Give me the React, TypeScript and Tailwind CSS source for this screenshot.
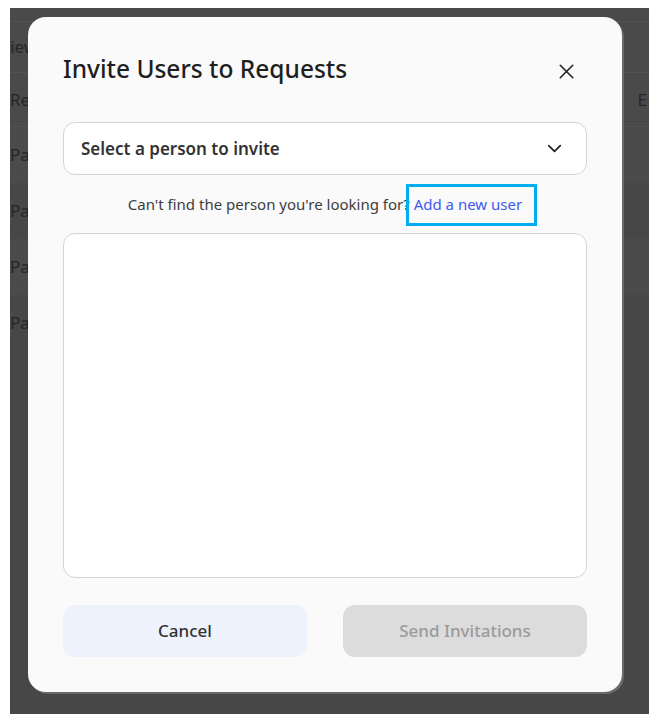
import { ChevronDown, X } from 'lucide-react'

const rows = ['Pa', 'Pa', 'Pa', 'Pa']

export default function App() {
  return (
    <div className="h-[726px] w-[666px] bg-white pl-[10px] pt-[8px]" style={{ fontFamily: '"Noto Sans", sans-serif' }}>
      <div className="relative h-[706px] w-[639px] overflow-hidden bg-[#474747] text-[17px] text-[#262626]">
        {/* page behind the overlay */}
        <div className="h-[14px] border-b border-[#525252] bg-[#4a4a4a]" />
        <div className="flex h-[51px] items-center border-b border-[#525252] bg-[#4a4a4a]">
          <span className="-ml-[10px]">View</span>
        </div>
        <div className="flex h-[54px] items-center justify-between border-b border-[#525252] bg-[#4a4a4a]">
          <span>Re</span>
          <span className="mr-[2px]">E</span>
        </div>
        {rows.map((r, i) => (
          <div key={i} className={`flex h-[56px] items-center ${i % 2 === 0 ? 'bg-[#4b4b4b]' : 'bg-[#474747]'}`}>
            <span>{r}</span>
          </div>
        ))}

        {/* modal */}
        <div className="absolute left-[18px] top-[9px] flex h-[675px] w-[594px] flex-col rounded-[18px] bg-[#fafafa] px-[35px] pt-[35px] shadow-[2px_2px_0_#6a6a6a]">
          <div className="flex items-center justify-between">
            <h2 className="text-[24.5px] font-medium leading-[34px] text-[#1f1f1f]">Invite Users to Requests</h2>
            <X className="mr-[8px] mt-[4px] h-[25px] w-[25px] text-[#222]" strokeWidth={1.5} />
          </div>

          <button className="mt-[36px] flex h-[53px] w-full items-center justify-between rounded-[12px] border border-[#d4d4d4] bg-white pl-[17px] pr-[20px] text-[17px] font-semibold text-[#333]">
            Select a person to invite
            <ChevronDown className="h-[23px] w-[23px] text-[#222]" strokeWidth={1.8} />
          </button>

          <p className="relative mt-[18px] text-center text-[15px] leading-[22px] text-[#3d3d3d]">
            Can't find the person you're looking for?{' '}
            <a className="relative text-[#3d5af1]">
              Add a new user
              <span className="absolute -left-[8px] -top-[10px] h-[42px] w-[131px] border-[3px] border-[#00adef]" />
            </a>
          </p>

          <div className="mt-[18px] h-[345px] w-full rounded-[12px] border border-[#d4d4d4] bg-white" />

          <div className="mt-[27px] grid grid-cols-2 gap-[36px]">
            <button className="h-[52px] rounded-[12px] bg-[#edf2fc] text-[17px] font-medium text-[#333]">Cancel</button>
            <button className="h-[52px] rounded-[12px] bg-[#dcdcdc] text-[17px] font-medium text-[#9a9a9a]">Send Invitations</button>
          </div>
        </div>
      </div>
    </div>
  )
}
